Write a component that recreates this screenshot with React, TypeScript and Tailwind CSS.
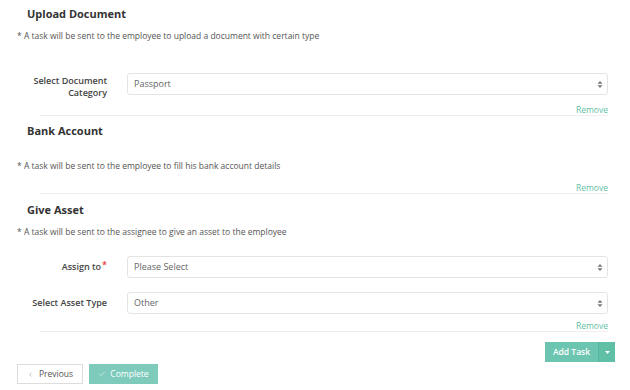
import { Check, ChevronLeft } from 'lucide-react';

const font = { fontFamily: '"Open Sans", "Noto Sans", sans-serif' };

function SelectBox({ value }: { value: string }) {
  return (
    <div className="flex-1 h-[22px] border border-[#e4e4e4] rounded-[3px] bg-white flex items-center justify-between pl-[6px] pr-[4px]">
      <span className="text-[9px] text-[#666]">{value}</span>
      <svg width="6" height="9" viewBox="0 0 6 9" className="text-[#777]">
        <path d="M3 1 L5.5 3.8 H0.5 Z" fill="currentColor" />
        <path d="M3 8 L5.5 5.2 H0.5 Z" fill="currentColor" />
      </svg>
    </div>
  );
}

function FieldRow({ label, value, required, className, labelClass }: { label: React.ReactNode; value: string; required?: boolean; className?: string; labelClass?: string }) {
  return (
    <div className={`flex items-center gap-[20px] h-[22px] ${className ?? ''}`}>
      <div className={`w-[90px] shrink-0 text-right text-[9px] leading-[12px] text-[#444] font-semibold ${labelClass ?? '-mt-[1px]'}`}>
        {label}
        {required && <span className="text-[#e53935] relative -top-[2px] ml-[1px]">*</span>}
      </div>
      <SelectBox value={value} />
    </div>
  );
}

function Remove({ className }: { className?: string }) {
  return (
    <div className={`flex justify-end h-[10px] leading-[10px] text-[8.5px] text-[#5fc1a6] ${className ?? ''}`}>
      Remove
    </div>
  );
}

function Divider() {
  return <div className="ml-[23px] h-px bg-[#eeeeee]" />;
}

export default function App() {
  return (
    <div className="w-[630px] h-[390px] bg-white overflow-hidden" style={font}>
      <div className="pl-[17px] pr-[22px]">
        {/* Upload Document */}
        <h2 className="pt-[7px] pl-[10px] text-[11px] leading-[14px] font-bold text-[#333]">Upload Document</h2>
        <p className="mt-[9px] text-[8.5px] leading-[12px] text-[#555]">
          * A task will be sent to the employee to upload a document with certain type
        </p>
        <FieldRow
          className="mt-[31px]"
          labelClass="mt-[6px] leading-[11px]"
          label={<>Select Document<br />Category</>}
          value="Passport"
        />
        <Remove className="mt-[10px]" />
        <Divider />

        {/* Bank Account */}
        <h2 className="mt-[8px] pl-[10px] text-[11px] leading-[14px] font-bold text-[#333]">Bank Account</h2>
        <p className="mt-[22px] text-[8.5px] leading-[12px] text-[#555]">
          * A task will be sent to the employee to fill his bank account details
        </p>
        <Remove className="mt-[11px]" />
        <Divider />

        {/* Give Asset */}
        <h2 className="mt-[9px] pl-[10px] text-[11px] leading-[14px] font-bold text-[#333]">Give Asset</h2>
        <p className="mt-[9px] text-[8.5px] leading-[12px] text-[#555]">
          * A task will be sent to the assignee to give an asset to the employee
        </p>
        <FieldRow className="mt-[18px]" label="Assign to" required value="Please Select" />
        <FieldRow className="mt-[14px]" label="Select Asset Type" value="Other" />
        <Remove className="mt-[7px]" />
        <Divider />
      </div>

      <div className="flex justify-end pr-[15px] mt-[10px]">
        <div className="flex h-[20px] text-white text-[8.5px] font-semibold">
          <button className="w-[53px] bg-[#6cc5b0] flex items-center justify-center">Add Task</button>
          <button className="w-[17px] bg-[#5fbfa7] border-l border-[#58b69e] flex items-center justify-center">
            <svg width="5" height="3" viewBox="0 0 5 3"><path d="M0 0 H5 L2.5 3 Z" fill="white" /></svg>
          </button>
        </div>
      </div>

      <div className="flex gap-[6px] pl-[17px] mt-[2px]">
        <button className="w-[66px] h-[20px] border border-[#dddddd] bg-white flex items-center justify-center gap-[5px] text-[8.5px] text-[#555]">
          <ChevronLeft size={7} strokeWidth={1.5} className="text-[#777]" />
          Previous
        </button>
        <button className="w-[69px] h-[20px] bg-[#7ecbbc] flex items-center justify-center gap-[4px] text-[8.5px] text-white">
          <Check size={8} strokeWidth={1.5} />
          Complete
        </button>
      </div>
    </div>
  );
}
